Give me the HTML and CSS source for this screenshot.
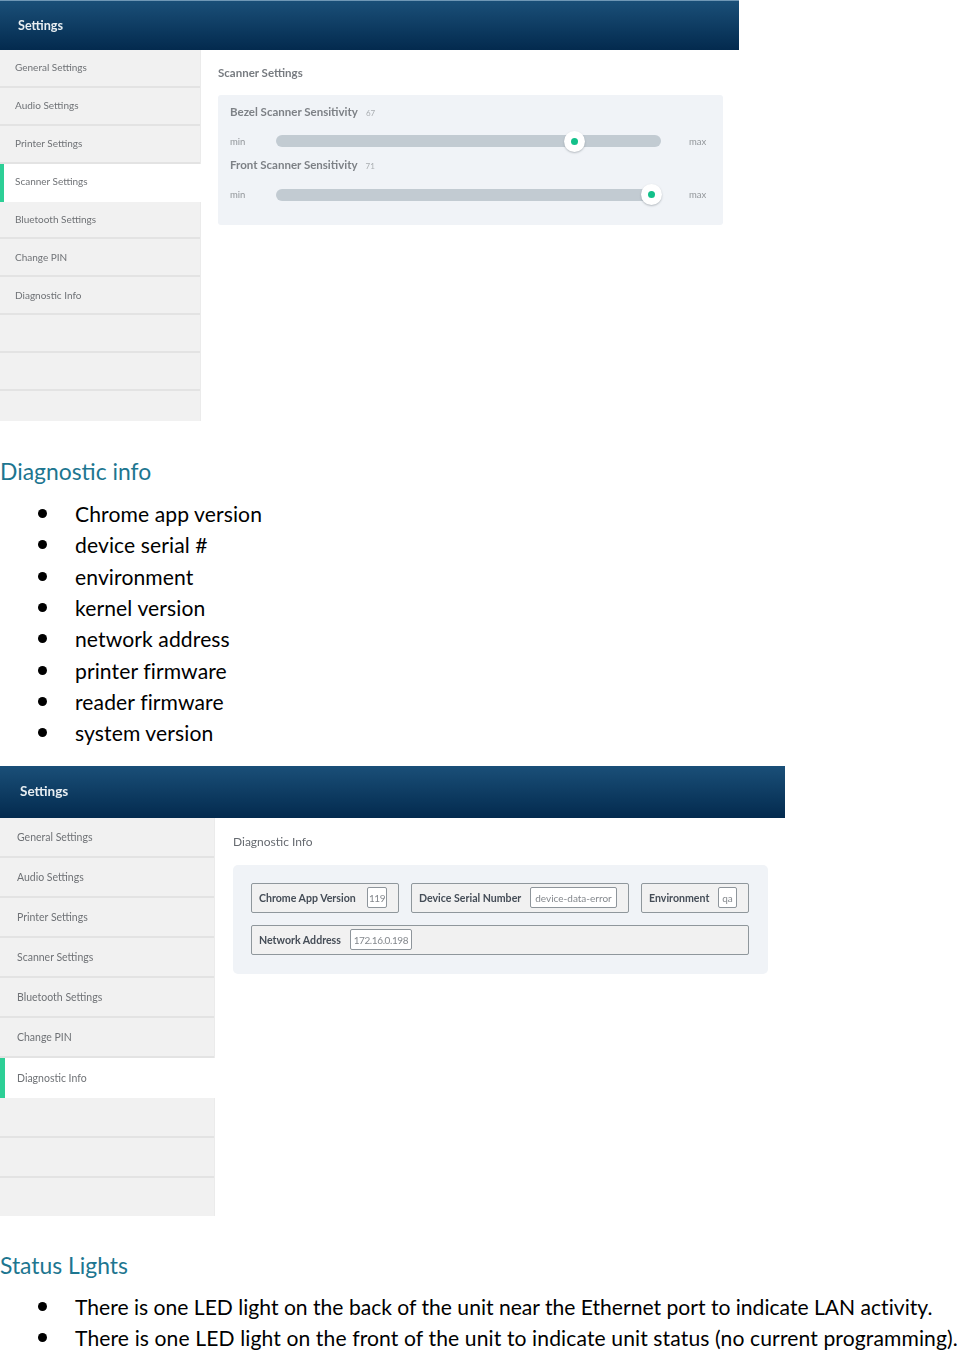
FILE: index.html
```html
<!DOCTYPE html>
<html lang="en">
<head>
<meta charset="utf-8">
<title>Settings documentation</title>
<link rel="stylesheet" href="styles.css">
</head>
<body>
<section class="shot shot-a">
  <header class="bar">Settings</header>
  <div class="split">
    <nav class="side">
      <div class="item">General Settings</div>
      <div class="item">Audio Settings</div>
      <div class="item">Printer Settings</div>
      <div class="item active">Scanner Settings</div>
      <div class="item">Bluetooth Settings</div>
      <div class="item">Change PIN</div>
      <div class="item">Diagnostic Info</div>
      <div class="item"></div>
      <div class="item"></div>
      <div class="item last"></div>
    </nav>
    <main class="content">
      <h2 class="title">Scanner Settings</h2>
      <div class="panel">
        <div class="sense"><strong>Bezel Scanner Sensitivity</strong><span>67</span></div>
        <div class="slider">
          <span class="end">min</span>
          <div class="track"><i class="thumb" style="left:77.5%"></i></div>
          <span class="end">max</span>
        </div>
        <div class="sense"><strong>Front Scanner Sensitivity</strong><span>71</span></div>
        <div class="slider">
          <span class="end">min</span>
          <div class="track"><i class="thumb" style="left:97.5%"></i></div>
          <span class="end">max</span>
        </div>
      </div>
    </main>
  </div>
</section>

<h1 class="doc-h h-first">Diagnostic info</h1>
<ul class="doc-list short">
  <li>Chrome app version</li>
  <li>device serial #</li>
  <li>environment</li>
  <li>kernel version</li>
  <li>network address</li>
  <li>printer firmware</li>
  <li>reader firmware</li>
  <li>system version</li>
</ul>

<section class="shot shot-b">
  <header class="bar">Settings</header>
  <div class="split">
    <nav class="side">
      <div class="item">General Settings</div>
      <div class="item">Audio Settings</div>
      <div class="item">Printer Settings</div>
      <div class="item">Scanner Settings</div>
      <div class="item">Bluetooth Settings</div>
      <div class="item">Change PIN</div>
      <div class="item active">Diagnostic Info</div>
      <div class="item"></div>
      <div class="item"></div>
      <div class="item last"></div>
    </nav>
    <main class="content">
      <h2 class="title">Diagnostic Info</h2>
      <div class="panel">
        <div class="fields">
          <div class="field"><b>Chrome App Version</b><span class="val num v-chrome">119</span></div>
          <div class="field"><b>Device Serial Number</b><span class="val v-serial">device-data-error</span></div>
          <div class="field"><b>Environment</b><span class="val v-env">qa</span></div>
          <div class="field f-net"><b>Network Address</b><span class="val num v-net">172.16.0.198</span></div>
        </div>
      </div>
    </main>
  </div>
</section>

<h1 class="doc-h h-second">Status Lights</h1>
<ul class="doc-list">
  <li>There is one LED light on the back of the unit near the Ethernet port to indicate LAN activity.</li>
  <li class="wide">There is one LED light on the front of the unit to indicate unit status (no current programming).</li>
</ul>
</body>
</html>
```

FILE: styles.css
```css
* { box-sizing: border-box; }
html, body { margin: 0; padding: 0; }
body {
  width: 957px;
  height: 1350px;
  overflow: hidden;
  background: #fff;
  font-family: "Lato", "Liberation Sans", sans-serif;
  color: #000;
}

/* screenshots of the settings app: soft, as a scaled-down capture is */
.shot { display: flex; flex-direction: column; filter: blur(0.45px); }
.bar {
  flex: none;
  display: flex;
  align-items: center;
  background: linear-gradient(#1a4f78, #032a4e);
  color: #e8eef2;
  font-weight: 700;
}
.split { display: flex; }
.side { flex: none; background: #f1f1f1; border-right: 1px solid #ebebeb; }
.item {
  display: flex;
  align-items: center;
  color: #6f7276;
  border-bottom: 2px solid #e3e3e3;
}
.item.last { border-bottom: 0; }
.item.active {
  background: #fff;
  border-bottom: 0;
  border-left: 4px solid #2dcf96;
  margin-right: -1px;
}
.content { flex: 1; }
.title { margin: 0; color: #777b80; }
.panel { background: #f0f3f7; border-radius: 3px; }

.shot-a { width: 739px; height: 421px; }
.shot-a .bar { height: 50px; padding: 0 0 1px 18px; font-size: 12.6px; border-top: 1px solid #6f97b5; }
.shot-a .side { width: 201px; }
.shot-a .item { height: 37.9px; padding: 0 0 1px 15px; font-size: 10px; }
.shot-a .item.active { padding: 0 0 3px 11px; }
.shot-a .item.last { height: 29.9px; }
.shot-a .content { padding: 15px 16px 0 17px; }
.shot-a .title { font-size: 11.5px; font-weight: 700; line-height: 16px; margin-bottom: 14px; }
.shot-a .panel { height: 129.5px; padding: 8.5px 16px 0 12px; }
.sense { display: flex; align-items: baseline; gap: 8px; height: 17px; line-height: 15px; color: #7d8186; }
.sense strong { font-size: 11.5px; font-weight: 700; }
.sense span { font-size: 8px; color: #a9adb1; }
.slider { display: flex; align-items: center; height: 12px; margin: 14.8px 0 9.8px; }
.end { flex: none; width: 46px; font-size: 9.5px; color: #92969a; }
.end:last-child { padding-left: 28px; }
.track { position: relative; flex: 1; height: 12px; border-radius: 6px; background: #c2cbd2; }
.thumb {
  position: absolute;
  top: 50%;
  width: 21px;
  height: 21px;
  margin: -10.5px 0 0 -10.5px;
  border-radius: 50%;
  background: #fff;
  box-shadow: 0 1px 2px rgba(70, 80, 90, .35);
}
.thumb::after {
  content: "";
  position: absolute;
  left: 7px;
  top: 7px;
  width: 7px;
  height: 7px;
  border-radius: 50%;
  background: #13c08a;
}

.doc-h {
  font-weight: 400;
  font-size: 22.9px;
  line-height: 30px;
  color: #1d7690;
}
.h-first { margin: 35px 0 12px; }
.h-second { margin: 34px 0 11px; }
.doc-list { margin: 0; padding: 0; list-style: none; }
.doc-list li {
  position: relative;
  padding-left: 75px;
  font-size: 21.1px;
  line-height: 31.33px;
  white-space: nowrap;
  font-variant-ligatures: none;
}
.doc-list.short li { letter-spacing: 0.1px; }
.doc-list li.wide { letter-spacing: 0.11px; }
.doc-list li::before {
  content: "";
  position: absolute;
  left: 38px;
  top: 11px;
  width: 9px;
  height: 9px;
  border-radius: 50%;
  background: #000;
}

.shot-b { width: 785px; height: 450px; margin-top: 17px; }
.shot-b .bar { height: 52px; padding: 0 0 2px 20px; font-size: 13.5px; }
.shot-b .side { width: 215px; }
.shot-b .item { height: 40px; padding-left: 17px; font-size: 10.5px; }
.shot-b .item.active { padding-left: 12px; border-left-width: 5px; }
.shot-b .item.last { height: 38px; }
.shot-b .content { padding: 16px 17px 0 18px; }
.shot-b .title { font-size: 12px; font-weight: 400; line-height: 16px; margin-bottom: 15px; color: #666a70; }
.shot-b .panel { height: 109px; padding: 18px 19px 0 18px; border-radius: 5px; }
.fields { display: grid; grid-template-columns: 148px 218px 108px; gap: 12px; }
.field {
  display: flex;
  align-items: center;
  justify-content: space-between;
  height: 30px;
  padding: 0 11px 0 7px;
  background: #f1f1f1;
  border: 1px solid #8f979c;
  border-radius: 2px;
  font-size: 10.6px;
  color: #454d57;
}
.field b { font-weight: 700; }
.val {
  display: flex;
  align-items: center;
  justify-content: center;
  height: 21px;
  background: #fff;
  border: 1px solid #8e959b;
  border-radius: 2px;
  font-size: 10px;
  color: #84888d;
}
.num { letter-spacing: -0.4px; }
.f-net { grid-column: 1 / -1; justify-content: flex-start; }
.v-chrome { width: 20px; }
.v-serial { width: 87px; }
.v-env { width: 19px; }
.v-net { width: 62px; margin-left: 9px; }
```
